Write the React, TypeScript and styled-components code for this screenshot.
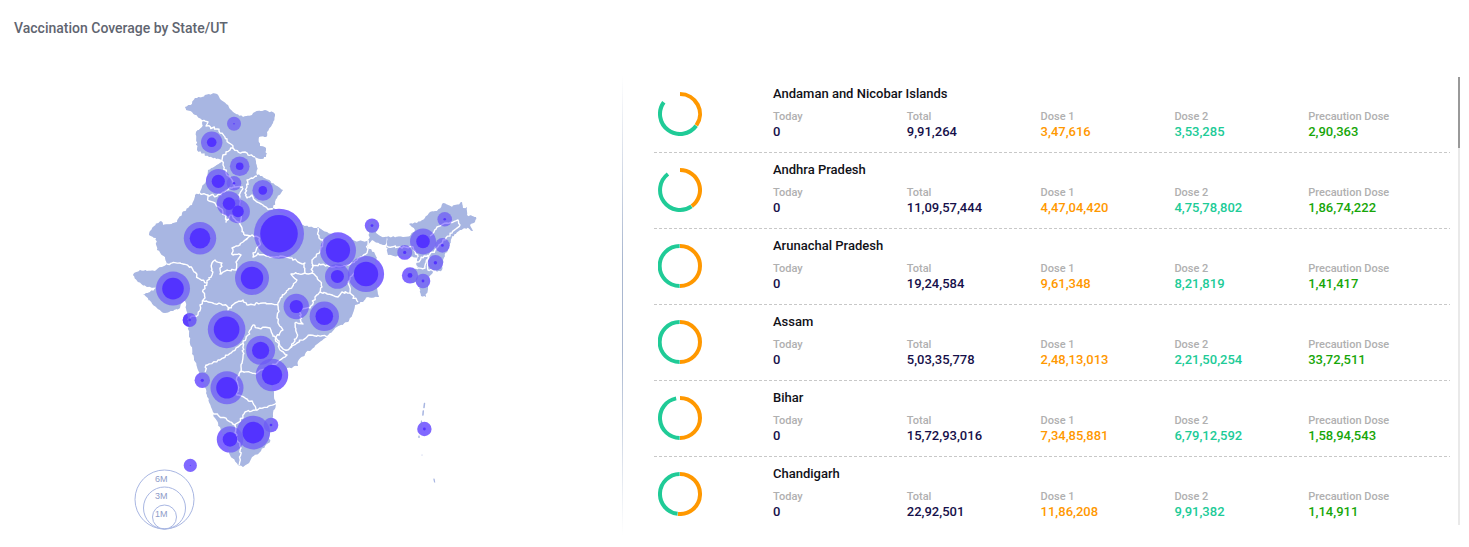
import React from "react";
import styled, { createGlobalStyle } from "styled-components";

const GlobalStyle = createGlobalStyle`
  *, *::before, *::after { box-sizing: border-box; }
  body {
    margin: 0;
    background: #fff;
    font-family: Roboto, "Liberation Sans", sans-serif;
  }
`;

const Page = styled.main`
  padding: 18px 9px 12px 14px;
`;

const Heading = styled.h1`
  margin: 0;
  font-size: 14px;
  line-height: 20px;
  font-weight: 500;
  color: #5f6570;
`;

const Content = styled.div`
  display: grid;
  grid-template-columns: minmax(0, 608fr) 1px minmax(0, 837fr);
  margin-top: 37px;
`;

const MapPanel = styled.section`
  display: flex;
  justify-content: center;
  padding: 10px 14px 0 0;
`;

const MapSvg = styled.svg`
  display: block;
  width: 100%;
  max-width: 360px;
  height: auto;
`;

const Divider = styled.div`
  background: linear-gradient(#fff, #a9b7d0 40%, #a9b7d0 60%, #fff);
`;

const ListPanel = styled.section`
  display: flex;
  gap: 8px;
  height: 450px;
  padding: 2px 0 0 31px;
`;

const StateList = styled.ul`
  flex: 1;
  min-width: 0;
  margin: 0;
  padding: 0;
  list-style: none;
  overflow: hidden;
`;

const StateRow = styled.li`
  display: flex;
  height: 76px;
  padding: 8px 8px 0 4px;
  background: repeating-linear-gradient(90deg, #c8c8c8 0 3px, transparent 3px 5px) bottom / 100% 1px no-repeat;
`;

const Donut = styled.svg`
  flex: none;
  width: 44px;
  height: 44px;
  margin: 7px 71px 0 0;
`;

const StateInfo = styled.div`
  flex: 1;
  min-width: 0;
`;

const StateName = styled.h2`
  margin: 0 0 7px;
  font-size: 13px;
  line-height: 17px;
  font-weight: 500;
  color: #111118;
`;

const Figures = styled.dl`
  display: grid;
  grid-template-columns: repeat(5, minmax(0, 1fr));
  margin: 0;
`;

const Label = styled.dt`
  font-size: 11px;
  line-height: 15px;
  font-weight: 500;
  color: #b0b0b0;
  white-space: nowrap;
`;

const Value = styled.dd<{ $color: string }>`
  margin: 0;
  font-size: 13px;
  line-height: 15px;
  font-weight: 500;
  color: ${(p) => p.$color};
`;

const ScrollTrack = styled.div`
  flex: none;
  width: 2px;
  background: #e9e9e9;
`;

const ScrollThumb = styled.div`
  height: 71px;
  background: #999;
`;

const LegendText = styled.text`
  font-family: "Liberation Sans", Arial, sans-serif;
  font-size: 9px;
  fill: #8e9bc8;
`;

type Pt = [number, number];

const parse = (s: string): Pt[] =>
  s.trim().split(/\s+/).map((p) => p.split(",").map(Number) as Pt);

/* Breaks straight runs into short uneven steps, like a surveyed boundary. */
function boundary(src: string, amount: number, closed = false): string {
  const pts = parse(src);
  if (closed) pts.push(pts[0]);
  let seed = Math.round(pts[0][0] * 31 + pts[0][1] * 17);
  const rand = () => {
    seed = (seed * 16807 + 11) % 2147483647;
    return seed / 2147483647 - 0.5;
  };
  for (let i = 0; i < 6; i++) rand();
  let d = `M${pts[0][0]} ${pts[0][1]}`;
  for (let i = 1; i < pts.length; i++) {
    const [ax, ay] = pts[i - 1];
    const [bx, by] = pts[i];
    const n = Math.max(1, Math.round(Math.hypot(bx - ax, by - ay) / 2));
    for (let k = 1; k <= n; k++) {
      const t = k / n;
      const j = k === n ? 0 : amount;
      const x = ax + (bx - ax) * t + rand() * j;
      const y = ay + (by - ay) * t + rand() * j;
      d += `L${x.toFixed(1)} ${y.toFixed(1)}`;
    }
  }
  return closed ? d + "Z" : d;
}

const mainland = `185,107 192,104 195,98 202,97 209,94 217,94 220,99 228,105 233,112 243,117 252,115
255,112 265,110 275,114 273,123 267,132 266,137 259,137 260,146 266,148 266,157 261,159 255,157 257,167
257,175 262,176 275,185 283,190 277,198 273,208 292,218 303,225 317,228 318,227 327,232 337,237 355,241
367,241 369,239 369,232 367,229 368,222 375,221 377,227 376,233 382,237 387,237 385,245 380,244 372,240
368,245 367,248 374,252 377,258 374,266 376,276 377,288 379,297 368,297 363,302 355,305 353,313 348,322
335,328 327,337 313,348 305,354 298,361 298,366 287,368 283,374 272,387 274,395 276,403 273,413 273,427
269,435 270,442 265,446 259,453 252,457 249,463 243,467 238,465 230,455 225,441 220,427 215,418 211,407
205,387 198,370 194,360 190,340 188,323 186,303 183,300 180,308 173,311 165,313 157,308 143,294 150,292
157,288 147,287 138,282 133,275 140,270 155,271 162,267 167,264 165,257 157,250 156,238 149,235 152,228
161,221 163,225 177,222 182,213 192,205 195,195 200,193 202,187 207,180 208,170 220,163 222,160 209,157
197,150 196,132 202,127 202,120 192,112 186,110`;

const northEast = `387,237 410,236 415,230 409,224 417,223 425,218 430,212 437,211 443,203 452,207 462,202
463,208 467,207 467,215 476,217 475,222 470,225 473,231 468,228 460,230 452,237 448,248 443,260 442,270
433,272 428,277 428,287 426,297 421,296 419,285 415,282 412,283 408,277 408,270 417,269 417,260 418,257
408,256 397,256 388,255 387,245`;

const borders = [
  "202,121 208,122 206,126 217,129 220,133 227,139 233,148 240,153 245,152 248,155 255,157",
  "233,148 226,152 222,160 223,165 226,173 232,180 235,187 243,187",
  "257,176 247,180 247,187 245,193 247,198 252,195 257,202 267,208 273,209",
  "200,193 208,195 217,196 223,192 232,188 235,187",
  "208,195 209,201 215,203 220,208 225,215 226,222 230,215 238,222 242,228 244,235",
  "243,188 239,195 240,203 241,223",
  "244,235 252,235 243,242 232,248 233,255 241,255 236,262 236,270 227,270 220,274 222,263 215,260 212,263 212,275 207,283",
  "167,264 180,263 192,268 198,278 207,283 203,290 205,298 200,305 198,315 190,318",
  "203,300 227,306 228,310 235,303 243,300 248,305 263,303 278,305",
  "252,235 258,237 260,245 253,253 253,257 258,253 270,257 280,256 292,258 300,263 305,263 305,273 291,274 297,280 288,290 282,297 278,303 278,323 283,330 276,337 277,342 285,350 290,348 297,343 310,335 329,336",
  "305,273 312,273 312,260 320,252 323,242 319,238 318,228",
  "312,265 327,265 332,267 348,265 357,260 367,253 368,240",
  "312,273 317,277 322,287 320,292 332,295 338,297 342,292 350,293 348,283 350,277 356,270",
  "350,293 358,302",
  "320,292 315,297 310,308 300,310 301,322 303,324 295,323 297,337 290,348",
  "205,372 206,365 220,360 228,355 238,347 243,343 248,335 253,325 258,328 270,328 273,336 276,338 279,344 280,350 287,355 280,360 270,367 257,373 240,372 243,357 243,343",
  "240,372 237,377 238,386 237,395 247,399 253,403 256,410 245,412 243,418 235,425 227,420 212,412",
  "256,410 263,408 276,403",
  "235,425 237,440 241,448 239,465",
  "387,246 400,247 413,247 418,257",
  "430,236 433,233 437,227 447,223 458,220 460,225 452,233 443,240 435,250 428,256 425,268 417,269",
  "452,237 468,228",
  "417,262 424,256 428,255",
  "428,256 428,270 436,271",
];

/* cx, cy, halo radius, core radius */
const bubbles: [number, number, number, number][] = [
  [234, 123.7, 7, 0.7],
  [211.7, 142.3, 10.7, 4.8],
  [239.7, 166.3, 9.8, 3.8],
  [218.3, 181.3, 12.4, 6.6],
  [234, 183.3, 7.3, 1.2],
  [262.8, 190.4, 10.4, 4.3],
  [229, 203.6, 12.3, 6.3],
  [238, 211.4, 11.9, 5.8],
  [279, 233.7, 25, 18.8],
  [200, 238.3, 16.2, 10.3],
  [173, 288.6, 17, 10.8],
  [252, 278, 17, 11.2],
  [189.7, 320, 7, 1.2],
  [189.5, 320, 6.8, 0.8],
  [226.6, 329.4, 18.8, 12.8],
  [296.3, 306.5, 12.7, 6.6],
  [324.3, 316.3, 14.7, 8.8],
  [338, 250.3, 18, 12.1],
  [337.4, 276.4, 12.4, 6.5],
  [366, 274, 18.1, 12.2],
  [372, 225.6, 7.2, 1.4],
  [444.7, 219.3, 7.3, 1.3],
  [423, 241.4, 13, 6.8],
  [442.4, 245.4, 7.3, 1.4],
  [404.7, 252.4, 7.4, 1.6],
  [435.4, 262.8, 7.7, 1.7],
  [410, 275.4, 8.1, 2.4],
  [423, 281, 7.3, 1.4],
  [260.6, 350.3, 14.5, 8.6],
  [272, 375, 16.2, 10.2],
  [227, 387.8, 16.5, 10.8],
  [202.3, 380.3, 7.7, 1.6],
  [253.3, 432.6, 16.8, 10.8],
  [230, 439.4, 13.2, 7.3],
  [271, 425, 7.3, 1.3],
  [190.3, 465.4, 6.6, 0.5],
  [424.4, 429, 7.2, 1.4],
];

const legend = [
  { text: "6M", cy: 499.5, r: 29.5, baseline: 482 },
  { text: "3M", cy: 508, r: 21, baseline: 499 },
  { text: "1M", cy: 517, r: 12, baseline: 517 },
];

function Land({ opacity = 1 }: { opacity?: number }) {
  return (
    <g fill="#a8b6e2" opacity={opacity}>
      <path d={boundary(mainland, 1.7, true)} />
      <path d={boundary(northEast, 1.7, true)} />
      <g stroke="#fff" strokeWidth="1.4" strokeLinejoin="round" fill="none">
        {borders.map((b) => (
          <path key={b} d={boundary(b, 2.2)} />
        ))}
      </g>
      <g stroke="#a8b6e2" strokeLinecap="round" fill="none">
        <path d="M424.5 403.5l-.5 4M423.3 411l-.4 4" strokeWidth="1.4" />
        <path d="M421.5 421l-.5 6M419 436v1.5M434 479l.6 3" strokeWidth="1.2" />
        <path d="M422 455v.2" strokeWidth=".6" />
      </g>
    </g>
  );
}

function CoverageMap() {
  return (
    <MapSvg viewBox="131 85 360 450" role="img" aria-label="Map of vaccination coverage">
      <Land />
      <g fill="#5333ff" fillOpacity="0.74">
        {bubbles.map(([cx, cy, r], i) => (
          <circle key={i} cx={cx} cy={cy} r={r} />
        ))}
      </g>
      {/* the land shows faintly through the halos */}
      <Land opacity={0.3} />
      <g fill="#5333ff">
        {bubbles.map(([cx, cy, , core], i) => (
          <circle key={i} cx={cx} cy={cy} r={core} />
        ))}
      </g>
      {legend.map((l) => (
        <g key={l.text}>
          <circle cx="164.5" cy={l.cy} r={l.r} fill="none" stroke="#a8b6e2" />
          <LegendText x="155" y={l.baseline}>{l.text}</LegendText>
        </g>
      ))}
    </MapSvg>
  );
}

const ORANGE = "#ff9800";
const TEAL = "#20cb97";

function arc(from: number, to: number) {
  const p = (deg: number) => {
    const a = ((deg - 90) * Math.PI) / 180;
    return `${(22 + 20 * Math.cos(a)).toFixed(2)} ${(22 + 20 * Math.sin(a)).toFixed(2)}`;
  };
  return `M${p(from)}A20 20 0 ${to - from > 180 ? 1 : 0} 1 ${p(to)}`;
}

function DoseDonut({ first, second }: { first: number; second: number }) {
  return (
    <Donut viewBox="0 0 44 44" fill="none" strokeWidth="4" aria-hidden="true">
      <path d={arc(0, first)} stroke={ORANGE} />
      <path d={arc(first + 1, second)} stroke={TEAL} />
    </Donut>
  );
}

const columns = [
  { label: "Today", color: "#16104a" },
  { label: "Total", color: "#16104a" },
  { label: "Dose 1", color: "#ff9800" },
  { label: "Dose 2", color: "#20cb97" },
  { label: "Precaution Dose", color: "#17a608" },
];

const states = [
  { name: "Andaman and Nicobar Islands", arcs: [125, 306], values: ["0", "9,91,264", "3,47,616", "3,53,285", "2,90,363"] },
  { name: "Andhra Pradesh", arcs: [144, 323], values: ["0", "11,09,57,444", "4,47,04,420", "4,75,78,802", "1,86,74,222"] },
  { name: "Arunachal Pradesh", arcs: [180, 359], values: ["0", "19,24,584", "9,61,348", "8,21,819", "1,41,417"] },
  { name: "Assam", arcs: [180, 359], values: ["0", "5,03,35,778", "2,48,13,013", "2,21,50,254", "33,72,511"] },
  { name: "Bihar", arcs: [180, 349], values: ["0", "15,72,93,016", "7,34,85,881", "6,79,12,592", "1,58,94,543"] },
  { name: "Chandigarh", arcs: [186, 359], values: ["0", "22,92,501", "11,86,208", "9,91,382", "1,14,911"] },
];

export default function App() {
  return (
    <>
      <GlobalStyle />
      <Page>
        <Heading>Vaccination Coverage by State/UT</Heading>
        <Content>
          <MapPanel>
            <CoverageMap />
          </MapPanel>
          <Divider />
          <ListPanel>
            <StateList>
              {states.map((s) => (
                <StateRow key={s.name}>
                  <DoseDonut first={s.arcs[0]} second={s.arcs[1]} />
                  <StateInfo>
                    <StateName>{s.name}</StateName>
                    <Figures>
                      {columns.map((c, i) => (
                        <div key={c.label}>
                          <Label>{c.label}</Label>
                          <Value $color={c.color}>{s.values[i]}</Value>
                        </div>
                      ))}
                    </Figures>
                  </StateInfo>
                </StateRow>
              ))}
            </StateList>
            <ScrollTrack>
              <ScrollThumb />
            </ScrollTrack>
          </ListPanel>
        </Content>
      </Page>
    </>
  );
}
